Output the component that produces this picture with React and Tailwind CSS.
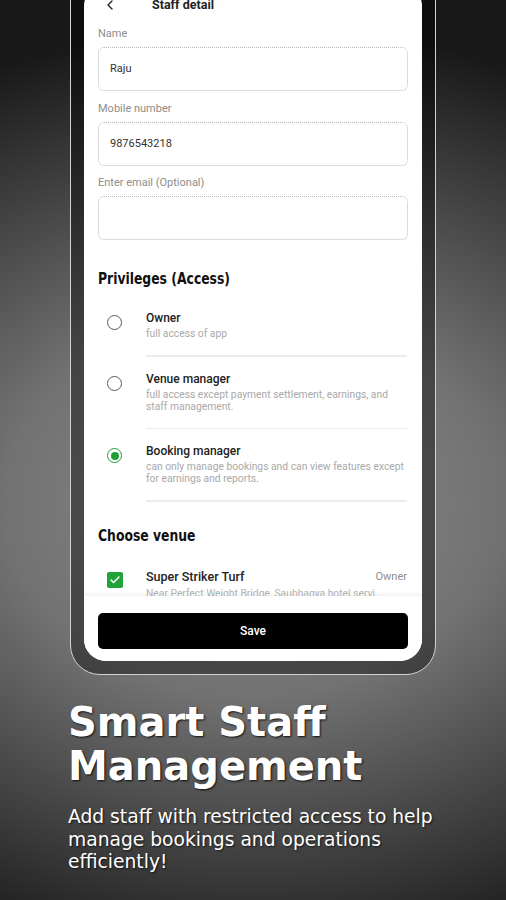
import React from 'react';
import { ChevronLeft, Check } from 'lucide-react';

const roles = [
  { title: 'Owner', desc: ['full access of app'], checked: false },
  {
    title: 'Venue manager',
    desc: ['full access except payment settlement, earnings, and', 'staff management.'],
    checked: false,
  },
  {
    title: 'Booking manager',
    desc: ['can only manage bookings and can view features except', 'for earnings and reports.'],
    checked: true,
  },
];

const Field = ({ label, value, className }) => (
  <div className={className}>
    <div className="text-[11px] leading-[14px] text-[#8d8d8d]">{label}</div>
    <div className="mt-[6px] h-[44px] rounded-[6px] border border-dotted border-[#b9b9b9] flex items-center px-[11px] text-[11px] text-[#333]">
      {value}
    </div>
  </div>
);

const Radio = ({ checked }) =>
  checked ? (
    <div className="w-[15px] h-[15px] rounded-full border-[1.5px] border-[#1f9e31] flex items-center justify-center">
      <div className="w-[8px] h-[8px] rounded-full bg-[#1f9e31]" />
    </div>
  ) : (
    <div className="w-[15px] h-[15px] rounded-full border-[1.5px] border-[#5a5a5a]" />
  );

const Heading = ({ children, className }) => (
  <div className={`h-[20px] flex items-center ${className}`}>
    <span className="inline-block origin-left scale-x-[0.86] text-[16px] font-bold text-[#111] font-['DejaVu_Sans',sans-serif] [font-stretch:condensed] whitespace-nowrap">
      {children}
    </span>
  </div>
);

export default function App() {
  return (
    <div className="w-[506px] h-[900px] overflow-hidden bg-[radial-gradient(ellipse_620px_480px_at_50%_56%,#8c8c8c_0%,#727272_40%,#181818_100%)] font-['Roboto',sans-serif]">
      {/* phone */}
      <div className="ml-[70px] -mt-[30px] w-[366px] rounded-[30px] border-[1.5px] border-[#d2d2d2] bg-black/40 p-[13px]">
        <div className="bg-white rounded-[22px] overflow-hidden">
          <div className="h-[612px] overflow-hidden px-[14px]">
            <div className="h-[42px] flex items-center">
              <ChevronLeft size={16} strokeWidth={2} className="ml-[4px] text-[#222]" />
              <span className="ml-[34px] text-[12.5px] font-bold text-[#222]">Staff detail</span>
            </div>
            <Field label="Name" value="Raju" className="mt-[1px]" />
            <Field label="Mobile number" value="9876543218" className="mt-[11px]" />
            <Field label="Enter email (Optional)" value="" className="mt-[10px]" />

            <Heading className="mt-[29px]">Privileges (Access)</Heading>

            <div className="mt-[7px]">
              {roles.map((r) => (
                <div key={r.title} className="flex">
                  <div className="w-[48px] pl-[9px] pt-[19px]">
                    <Radio checked={r.checked} />
                  </div>
                  <div className="flex-1 pr-[1px]">
                    <div className="pt-[15px] pb-[15px]">
                      <div className="text-[12px] leading-[14px] font-medium text-[#222]">{r.title}</div>
                      <div className="mt-[3px] text-[10.3px] leading-[12px] text-[#a9a9a9] whitespace-nowrap">
                        {r.desc.map((d) => (
                          <div key={d}>{d}</div>
                        ))}
                      </div>
                    </div>
                    <div className="h-[1.5px] bg-[#ececec]" />
                  </div>
                </div>
              ))}
            </div>

            <Heading className="mt-[24px]">Choose venue</Heading>

            <div className="mt-[25px] flex">
              <div className="w-[48px] pl-[9px] pt-[1px]">
                <div className="w-[16px] h-[16px] rounded-[2px] bg-[#22a33a] flex items-center justify-center">
                  <Check size={12} strokeWidth={3} className="text-white" />
                </div>
              </div>
              <div className="flex-1 min-w-0 pr-[1px]">
                <div className="flex justify-between items-center h-[14px]">
                  <span className="text-[12.5px] font-medium text-[#222]">Super Striker Turf</span>
                  <span className="text-[11px] text-[#8d8d8d]">Owner</span>
                </div>
                <div className="mt-[3px] text-[10.3px] leading-[12px] text-[#b5b5b5] whitespace-nowrap">
                  Near Perfect Weight Bridge, Saubhagya hotel servi...
                </div>
              </div>
            </div>
          </div>

          <div className="px-[14px] pt-[17px] pb-[12px] bg-white shadow-[0_-2px_4px_rgba(0,0,0,0.06)] relative">
            <div className="h-[36px] rounded-[5px] bg-black flex items-center justify-center text-white text-[12px] font-medium">
              Save
            </div>
          </div>
        </div>
      </div>

      {/* caption */}
      <div className="pl-[68px] pr-[50px] mt-[25px] text-white font-['DejaVu_Sans',sans-serif]">
        <div className="text-[40px] leading-[44px] font-bold [text-shadow:1px_1px_2px_rgba(0,0,0,0.85)]">
          Smart Staff Management
        </div>
        <div className="mt-[18px] text-[18.7px] leading-[22.5px] [text-shadow:1px_1px_2px_rgba(0,0,0,0.7)]">
          Add staff with restricted access to help manage bookings and operations efficiently!
        </div>
      </div>
    </div>
  );
}
